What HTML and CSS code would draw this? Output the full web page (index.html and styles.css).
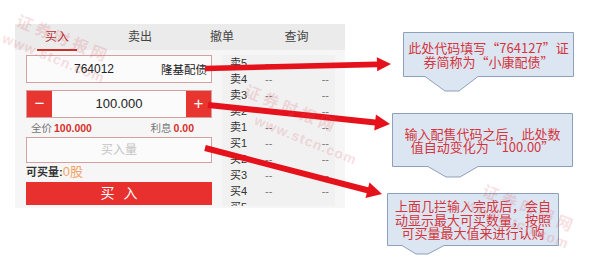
FILE: index.html
```html
<!DOCTYPE html>
<html lang="zh-CN">
<head>
<meta charset="utf-8">
<title>买入</title>
<link rel="stylesheet" href="styles.css">
</head>
<body>
<div class="app">
  <div class="tabs">
    <div class="tab tab-first"><span class="tab-active">买入</span></div>
    <div class="tab">卖出</div>
    <div class="tab">撤单</div>
    <div class="tab tab-last">查询</div>
  </div>
  <div class="content">
    <div class="form">
      <div class="code-box"><span class="code">764012</span><span class="name">隆基配债</span></div>
      <div class="stepper"><div class="step-btn">−</div><div class="step-val">100.000</div><div class="step-btn">+</div></div>
      <div class="price-row"><span>全价<b>100.000</b></span><span>利息<b>0.00</b></span></div>
      <div class="qty-box">买入量</div>
      <div class="avail">可买量:<span>0股</span></div>
      <div class="buy-btn">买入</div>
    </div>
    <div class="book">
      <div class="row"><span class="lbl">卖5</span><span class="v">--</span><span class="v2">--</span></div>
      <div class="row"><span class="lbl">卖4</span><span class="v">--</span><span class="v2">--</span></div>
      <div class="row"><span class="lbl">卖3</span><span class="v">--</span><span class="v2">--</span></div>
      <div class="row"><span class="lbl">卖2</span><span class="v">--</span><span class="v2">--</span></div>
      <div class="row"><span class="lbl">卖1</span><span class="v">--</span><span class="v2">--</span></div>
      <div class="row"><span class="lbl">买1</span><span class="v">--</span><span class="v2">--</span></div>
      <div class="row"><span class="lbl">买2</span><span class="v">--</span><span class="v2">--</span></div>
      <div class="row"><span class="lbl">买3</span><span class="v">--</span><span class="v2">--</span></div>
      <div class="row"><span class="lbl">买4</span><span class="v">--</span><span class="v2">--</span></div>
      <div class="row"><span class="lbl">买5</span><span class="v">--</span><span class="v2">--</span></div>
    </div>
  </div>
</div>

<div class="callout c1">
  <svg class="shape" width="171" height="60" viewBox="0 0 171 60"><path d="M0.5 0.5 H170.5 V44.5 H75 L56 59 H42 L22 44.5 H0.5 Z" fill="#dce6f2" stroke="#8ea1bb" stroke-width="1"/></svg>
  <div class="txt">此处代码填写“764127”证<br>券简称为“小康配债”</div>
</div>
<div class="callout c2">
  <svg class="shape" width="181" height="66" viewBox="0 0 181 66"><path d="M0.5 0.5 H180.5 V53.5 H86 L68 64 H54 L36 53.5 H0.5 Z" fill="#dce6f2" stroke="#8ea1bb" stroke-width="1"/></svg>
  <div class="txt">输入配售代码之后，此处数<br>值自动变化为“100.00”</div>
</div>
<div class="callout c3">
  <svg class="shape" width="172" height="63" viewBox="0 0 172 63"><path d="M0.5 0.5 H171.5 V52.5 H57 L41 61 H29 L15 52.5 H0.5 Z" fill="#dce6f2" stroke="#8ea1bb" stroke-width="1"/></svg>
  <div class="txt">上面几拦输入完成后，会自<br>动显示最大可买数量，按照<br>可买量最大值来进行认购</div>
</div>

<svg class="overlay" width="600" height="264" viewBox="0 0 600 264">
  <polygon fill="#e6121b" points="205.07,71.3 377.07,67.14 377.17,71.34 391,64 376.83,57.34 376.93,61.54 204.93,65.7"/>
  <polygon fill="#e6121b" points="207.69,107.98 374.77,125.43 374.25,130.4 390,124 375.91,114.49 375.39,119.46 208.31,102.02"/>
  <polygon fill="#e6121b" points="204.25,150.9 366.73,193.13 365.47,197.97 382,194 369.49,182.49 368.23,187.33 205.75,145.1"/>
</svg>

<span class="wm wm-cn w1">证券时报网</span>
<span class="wm wm-url u1">www.stcn.com</span>
<span class="wm wm-cn w2">证券时报网</span>
<span class="wm wm-url u2">www.stcn.com</span>
<span class="wm wm-cn w3">证券时报网</span>
<span class="wm wm-url u3">www.stcn.com</span>
</body>
</html>
```

FILE: styles.css
```css
* { box-sizing: border-box; margin: 0; padding: 0; }
html, body { width: 600px; height: 264px; overflow: hidden; background: #ffffff; }
body {
  position: relative;
  font-family: "Liberation Sans", "Noto Sans CJK SC", sans-serif;
  color: #333;
}

.app {
  margin: 24px 0 0 15px;
  width: 330px;
  background: #f6f6f6;
}

.tabs { display: flex; height: 26px; background: #ebebeb; }
.tab {
  width: 82px;
  font-size: 12px;
  line-height: 26px;
  text-align: center;
  color: #444;
}
.tab-first { width: 84px; }
.tab-last { width: 67px; }
.tab-active {
  display: inline-block;
  padding: 0 8px;
  line-height: 23px;
  border-bottom: 2px solid #c8302c;
  color: #b83030;
}

.content {
  display: flex;
  gap: 10px;
  padding: 5px 10px 3px 11px;
  height: 158px;
}

.form { width: 186px; display: flex; flex-direction: column; }

.code-box {
  height: 28px;
  border: 1px solid #d6a0a0;
  background: #fbfbfb;
  display: flex;
  align-items: center;
  padding-right: 4px;
}
.code { flex: 1; text-align: center; font-size: 12px; color: #222; }
.name { font-size: 11.5px; color: #222; }

.stepper {
  margin-top: 7px;
  height: 28px;
  display: flex;
  border: 1px solid #d6a0a0;
  background: #fbfbfb;
}
.step-btn {
  width: 25px;
  background: #e8352f;
  color: #fff;
  font-size: 17px;
  line-height: 25px;
  text-align: center;
}
.step-val { flex: 1; text-align: center; font-size: 13px; line-height: 26px; color: #222; }

.price-row {
  height: 19px;
  display: flex;
  justify-content: space-between;
  align-items: center;
  font-size: 10.5px;
  color: #777;
  padding: 0 18px 0 5px;
}
.price-row b { color: #d7302c; margin-left: 2px; }

.qty-box {
  height: 26px;
  border: 1px solid #d6a0a0;
  background: #fbfbfb;
  text-align: center;
  line-height: 24px;
  font-size: 12px;
  color: #c4c4c4;
}

.avail { height: 18px; font-size: 11px; line-height: 18px; color: #333; font-weight: bold; }
.avail span { color: #f0a468; font-weight: normal; font-size: 13px; }

.buy-btn {
  margin-top: 1px;
  height: 23px;
  background: #e8302e;
  color: #fff;
  text-align: center;
  font-size: 14px;
  line-height: 23px;
  letter-spacing: 9px;
  padding-left: 9px;
}

.book { width: 113px; height: 151px; overflow: hidden; background: #f1f1f1; }
.row { display: flex; height: 16px; line-height: 16px; font-size: 11px; padding: 0 6px 0 8px; }
.lbl { width: 35px; color: #333; }
.v { flex: 1; color: #777; }
.v2 { color: #777; }

.callout { position: absolute; }
.callout .shape { position: absolute; left: 0; top: 0; overflow: visible; }
.callout .txt {
  position: relative;
  height: 100%;
  display: flex;
  align-items: center;
  justify-content: center;
  text-align: center;
  font-family: "Noto Sans CJK SC", sans-serif;
  font-size: 13px;
  line-height: 13.5px;
  color: #d4343c;
  white-space: nowrap;
}
.c1 { left: 403px; top: 32px; width: 171px; height: 45px; }
.c2 { left: 392px; top: 113px; width: 181px; height: 54px; }
.c3 { left: 387px; top: 193px; width: 172px; height: 53px; }

.overlay { position: absolute; left: 0; top: 0; pointer-events: none; }

.wm {
  position: absolute;
  white-space: nowrap;
  transform: rotate(22deg);
  transform-origin: left top;
  color: rgba(215, 90, 105, 0.2);
  pointer-events: none;
}
.wm-cn { font-family: "Noto Sans CJK SC", sans-serif; font-size: 16px; letter-spacing: 4px; font-weight: bold; }
.wm-url { font-family: "Liberation Sans", sans-serif; font-size: 14px; font-weight: bold; letter-spacing: 1px; }
.w1 { left: 22px; top: 8px; }
.u1 { left: 6px; top: 30px; }
.w2 { left: 250px; top: 78px; }
.u2 { left: 258px; top: 112px; }
.w3 { left: 488px; top: 178px; }
.u3 { left: 470px; top: 196px; }
```
